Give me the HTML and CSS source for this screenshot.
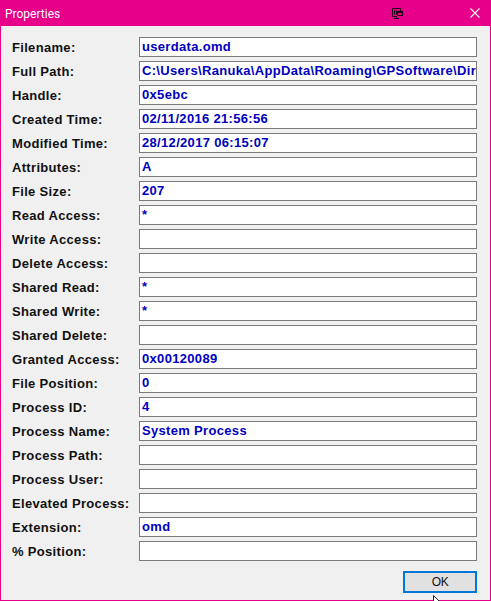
FILE: index.html
```html
<!DOCTYPE html>
<html lang="en">
<head>
<meta charset="utf-8">
<title>Properties</title>
<link rel="stylesheet" href="styles.css">
</head>
<body>
<div class="window">
  <header class="titlebar">
    <span class="title">Properties</span>
    <svg class="snap" width="11" height="11" viewBox="0 0 11 11" aria-hidden="true">
      <path d="M.5 8.500V.5h8v2.500M.5 8.500h4M2 10.500h5M4.500 8.500v2" fill="none" stroke="#1a0010"/>
      <path d="M2.500 2.500v4M4.500 2.500v4" stroke="#1a0010"/>
      <rect x="5" y="3" width="6" height="5" fill="#1a0010"/>
      <rect x="6" y="5" width="4" height="2" fill="#e6008a"/>
    </svg>
    <svg class="close" width="10" height="10" viewBox="0 0 10 10" aria-hidden="true">
      <path d="M.5.5l9 9M9.500.5l-9 9" stroke="#fff" stroke-width="1.100" fill="none"/>
    </svg>
  </header>
  <main class="content">
    <div class="rows">
      <div class="row"><span class="label">Filename:</span><span class="field">userdata.omd</span></div>
      <div class="row"><span class="label">Full Path:</span><span class="field">C:\Users\Ranuka\AppData\Roaming\GPSoftware\Dir</span></div>
      <div class="row"><span class="label">Handle:</span><span class="field">0x5ebc</span></div>
      <div class="row"><span class="label">Created Time:</span><span class="field">02/11/2016 21:56:56</span></div>
      <div class="row"><span class="label">Modified Time:</span><span class="field">28/12/2017 06:15:07</span></div>
      <div class="row"><span class="label">Attributes:</span><span class="field">A</span></div>
      <div class="row"><span class="label">File Size:</span><span class="field">207</span></div>
      <div class="row"><span class="label">Read Access:</span><span class="field">*</span></div>
      <div class="row"><span class="label">Write Access:</span><span class="field"></span></div>
      <div class="row"><span class="label">Delete Access:</span><span class="field"></span></div>
      <div class="row"><span class="label">Shared Read:</span><span class="field">*</span></div>
      <div class="row"><span class="label">Shared Write:</span><span class="field">*</span></div>
      <div class="row"><span class="label">Shared Delete:</span><span class="field"></span></div>
      <div class="row"><span class="label">Granted Access:</span><span class="field">0x00120089</span></div>
      <div class="row"><span class="label">File Position:</span><span class="field">0</span></div>
      <div class="row"><span class="label">Process ID:</span><span class="field">4</span></div>
      <div class="row"><span class="label">Process Name:</span><span class="field">System Process</span></div>
      <div class="row"><span class="label">Process Path:</span><span class="field"></span></div>
      <div class="row"><span class="label">Process User:</span><span class="field"></span></div>
      <div class="row"><span class="label">Elevated Process:</span><span class="field"></span></div>
      <div class="row"><span class="label">Extension:</span><span class="field">omd</span></div>
      <div class="row"><span class="label">% Position:</span><span class="field"></span></div>
    </div>
    <div class="actions"><button class="ok" type="button">OK</button></div>
  </main>
  <svg class="cursor" width="10" height="8" viewBox="0 0 10 8" aria-hidden="true">
    <path d="M.5.5v7h7z" fill="#fff" stroke="#222"/>
  </svg>
</div>
</body>
</html>
```

FILE: styles.css
```css
html, body {
  margin: 0;
  padding: 0;
  height: 601px;
  overflow: hidden;
}

.window {
  position: relative;
  box-sizing: border-box;
  width: 491px;
  height: 601px;
  display: flex;
  flex-direction: column;
  background: #f0f0f0;
  border: solid #e6008a;
  border-width: 0 1px 1px;
  font-family: "Liberation Sans", Arial, sans-serif;
}

.titlebar {
  flex: 0 0 26px;
  display: flex;
  align-items: center;
  padding: 0 10px 0 4px;
  background: #e6008a;
  color: #fff;
  font-family: Roboto, "Liberation Sans", sans-serif;
  font-size: 12px;
}

.title {
  flex: 1;
  padding-top: 1px;
}

.snap {
  margin: 1px 67px 0 0;
}

.content {
  flex: 1;
  display: flex;
  flex-direction: column;
  padding: 11px 13px 0 11px;
}

.rows {
  display: flex;
  flex-direction: column;
  gap: 4px;
}

.row {
  display: grid;
  grid-template-columns: 127px 1fr;
  height: 20px;
  align-items: center;
}

.label {
  font-size: 13px;
  font-weight: 700;
  letter-spacing: 0.32px;
  color: #111;
}

.field {
  box-sizing: border-box;
  height: 20px;
  padding: 0 2px;
  border: 1px solid #7a7a7a;
  background: #fff;
  color: #0000c0;
  font-size: 13px;
  font-weight: 700;
  letter-spacing: 0.32px;
  line-height: 18px;
  white-space: nowrap;
  overflow: hidden;
}

.actions {
  display: flex;
  justify-content: flex-end;
  margin-top: 10px;
}

.ok {
  box-sizing: border-box;
  width: 74px;
  height: 22px;
  padding: 0;
  border: 2px solid #0078d7;
  background: #e1e1e1;
  color: #111;
  font: 12px "Liberation Sans", Arial, sans-serif;
  letter-spacing: -0.5px;
}

.cursor {
  position: absolute;
  left: 432px;
  top: 595px;
}
```
